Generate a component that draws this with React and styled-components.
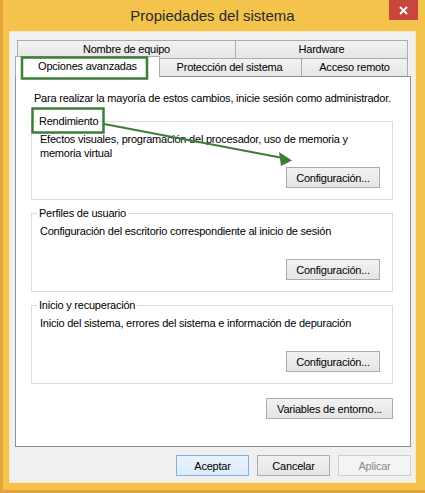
import React from 'react';
import styled, { createGlobalStyle } from 'styled-components';

const GlobalStyle = createGlobalStyle`
  html, body {
    margin: 0;
    padding: 0;
    background: #f3c34b;
  }
  body {
    font-family: "Liberation Sans", Arial, sans-serif;
    font-size: 11px;
    letter-spacing: -0.22px;
    color: #000;
  }
  * {
    box-sizing: border-box;
  }
`;

const Window = styled.div`
  position: relative;
  width: 425px;
  height: 493px;
  display: flex;
  flex-direction: column;
  background: #f3c34b;
  box-shadow: inset 3px 0 0 #e6a53a, inset 0 -3px 0 #e4a23a;
  overflow: hidden;
`;

const TitleBar = styled.div`
  flex: none;
  height: 31px;
  display: grid;
  grid-template-columns: 1fr auto 1fr;
`;

const Title = styled.div`
  grid-column: 2;
  font-size: 15px;
  letter-spacing: 0;
  line-height: 31px;
  color: #2a2a2a;
`;

const CloseButton = styled.div`
  grid-column: 3;
  justify-self: end;
  width: 29px;
  height: 20px;
  margin-right: 7px;
  background: #c9463d;
  display: flex;
  align-items: center;
  justify-content: center;
`;

const Client = styled.div`
  flex: 1;
  margin: 0 9px 10px;
  background: #f0f0f0;
  border: 1px solid #fbe7bd;
  padding: 8px 4px 0 5px;
  display: flex;
  flex-direction: column;
`;

const TabStrip = styled.div`
  margin: 0 3px 0 2px;
  display: flex;
  flex-direction: column;
`;

const TabRow = styled.div`
  display: flex;
  align-items: flex-start;
  height: 18px;
`;

const Tab = styled.div`
  width: ${p => p.$w}px;
  height: 18px;
  border: 1px solid #acacac;
  border-bottom: none;
  background: linear-gradient(#f2f2f2, #e6e6e6);
  text-align: center;
  line-height: 17px;
  white-space: nowrap;
  & + & {
    margin-left: -1px;
  }
  ${p => p.$selected && `
    position: relative;
    z-index: 2;
    width: ${p.$w + 4}px;
    height: 21px;
    margin: -2px -2px 0 -2px;
    background: #fff;
    line-height: 19px;
  `}
`;

const Panel = styled.div`
  flex: none;
  height: 371px;
  background: #fff;
  border: 1px solid #8e8f8f;
  padding: 14px 17px 0 15px;
  display: flex;
  flex-direction: column;
`;

const Intro = styled.div`
  line-height: 14px;
  padding-left: 3px;
  white-space: nowrap;
`;

const Group = styled.div`
  flex: none;
  height: 79px;
  margin-top: ${p => p.$top}px;
  border: 1px solid #dcdcdc;
  padding: 0 12px 0 8px;
  display: flex;
  flex-direction: column;
`;

const Legend = styled.div`
  align-self: flex-start;
  margin: -8px 0 0 -3px;
  padding: 0 2px;
  line-height: 14px;
  background: #fff;
`;

const Description = styled.div`
  margin-top: 4px;
  min-height: 28px;
  line-height: 14px;
`;

const Button = styled.button`
  flex: none;
  width: ${p => p.$w || 94}px;
  height: 21px;
  padding: 0;
  font: inherit;
  letter-spacing: inherit;
  color: #000;
  border: 1px solid #acacac;
  background: linear-gradient(#f2f2f2, #e5e5e5);
  border-radius: 0;
  ${p => p.$default && `
    border-color: #7fb2e3;
    background: linear-gradient(#eaf3fc, #dcebfb);
  `}
  ${p => p.$disabled && `
    color: #8a8a8a;
    border-color: #cfcfcf;
    background: #f4f4f4;
  `}
`;

const GroupButton = styled(Button)`
  align-self: flex-end;
  margin-top: 7px;
`;

const ButtonRow = styled.div`
  display: flex;
  justify-content: flex-end;
  gap: 8px;
  margin-top: ${p => p.$top}px;
`;

// green highlight drawn over the dialog
const Annotations = styled.svg`
  position: absolute;
  top: 0;
  left: 0;
  z-index: 5;
  pointer-events: none;
`;

const groups = [
  {
    title: 'Rendimiento',
    text: 'Efectos visuales, programación del procesador, uso de memoria y memoria virtual',
  },
  {
    title: 'Perfiles de usuario',
    text: 'Configuración del escritorio correspondiente al inicio de sesión',
  },
  {
    title: 'Inicio y recuperación',
    text: 'Inicio del sistema, errores del sistema e información de depuración',
  },
];

export default function App() {
  return (
    <Window>
      <GlobalStyle />
      <TitleBar>
        <Title>Propiedades del sistema</Title>
        <CloseButton>
          <svg width="9" height="9" viewBox="0 0 9 9">
            <path d="M1 1L8 8M8 1L1 8" stroke="#fff" strokeWidth="1.8" />
          </svg>
        </CloseButton>
      </TitleBar>
      <Client>
        <TabStrip>
          <TabRow>
            <Tab $w={219}>Nombre de equipo</Tab>
            <Tab $w={173}>Hardware</Tab>
          </TabRow>
          <TabRow>
            <Tab $w={141} $selected>Opciones avanzadas</Tab>
            <Tab $w={145}>Protección del sistema</Tab>
            <Tab $w={107}>Acceso remoto</Tab>
          </TabRow>
        </TabStrip>
        <Panel>
          <Intro>Para realizar la mayoría de estos cambios, inicie sesión como administrador.</Intro>
          {groups.map((g, i) => (
            <Group key={g.title} $top={i === 0 ? 16 : 13}>
              <Legend>{g.title}</Legend>
              <Description>{g.text}</Description>
              <GroupButton>Configuración...</GroupButton>
            </Group>
          ))}
          <ButtonRow $top={14}>
            <Button $w={127}>Variables de entorno...</Button>
          </ButtonRow>
        </Panel>
        <ButtonRow $top={8}>
          <Button $w={73} $default>Aceptar</Button>
          <Button $w={73}>Cancelar</Button>
          <Button $w={73} $disabled>Aplicar</Button>
        </ButtonRow>
      </Client>
      <Annotations width="425" height="493">
        <g fill="none" stroke="#3f7c38" strokeWidth="2.5">
          <rect x="22" y="57.5" width="125" height="21" />
          <rect x="32.5" y="108.5" width="71" height="24" />
          <path d="M104 124 L283 158" strokeWidth="2.2" />
        </g>
        <path d="M292 160.5 L279 152 L281 166 Z" fill="#3f7c38" />
      </Annotations>
    </Window>
  );
}
